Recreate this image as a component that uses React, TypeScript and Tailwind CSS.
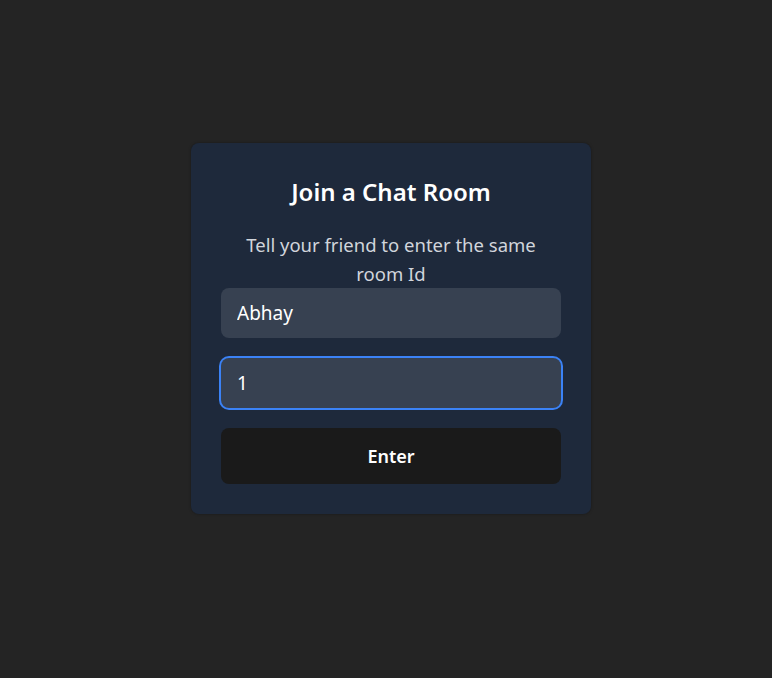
import { useState } from "react";

export default function App() {
  const [name, setName] = useState<string>("Abhay");
  const [roomId, setRoomId] = useState<string>("1");

  return (
    <div
      className="min-h-screen w-full bg-[#242424] flex items-center justify-center pb-[22px] pl-[10px]"
      style={{ fontFamily: '"Noto Sans", "Open Sans", sans-serif' }}
    >
      <div className="w-[400px] bg-[#1e293b] rounded-lg shadow-[0_0_3px_rgba(0,0,0,0.35)] px-[30px] pt-[33px] pb-[30px] flex flex-col">
        <h1 className="text-center text-white text-[24px] leading-8 font-semibold mb-[22px]">
          Join a Chat Room
        </h1>
        <p className="text-center text-[#d1d5db] text-[18.5px] leading-[29px] mb-0">
          Tell your friend to enter the same
          <br />
          room Id
        </p>
        <form className="flex flex-col gap-5" onSubmit={(e) => e.preventDefault()}>
          <input
            type="text"
            value={name}
            onChange={(e) => setName(e.target.value)}
            className="w-full h-[50px] rounded-lg bg-[#374151] text-white text-[19px] px-4 outline-none"
          />
          <input
            type="text"
            value={roomId}
            onChange={(e) => setRoomId(e.target.value)}
            className="w-full h-[50px] rounded-lg bg-[#374151] text-white text-[19px] px-4 outline-none ring-2 ring-[#3b82f6]"
          />
          <button
            type="submit"
            className="w-full h-14 rounded-lg bg-[#1a1a1a] text-white text-lg font-semibold"
          >
            Enter
          </button>
        </form>
      </div>
    </div>
  );
}
